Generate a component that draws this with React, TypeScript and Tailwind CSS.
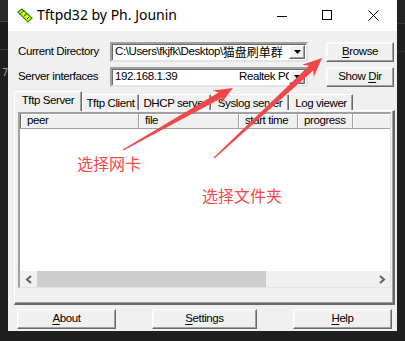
import React from "react";

type Pt = [number, number];

function arrowPoints(T: Pt, P: Pt, headLen: number, headW: number, shaftW: number, tailW: number) {
  const dx = P[0] - T[0];
  const dy = P[1] - T[1];
  const L = Math.hypot(dx, dy);
  const d = [dx / L, dy / L];
  const n = [-d[1], d[0]];
  const B = [P[0] - d[0] * headLen, P[1] - d[1] * headLen];
  const J = [P[0] - d[0] * headLen * 0.78, P[1] - d[1] * headLen * 0.78];
  const pts: number[][] = [
    [T[0] + n[0] * tailW, T[1] + n[1] * tailW],
    [J[0] + n[0] * shaftW, J[1] + n[1] * shaftW],
    [B[0] + n[0] * headW, B[1] + n[1] * headW],
    [P[0], P[1]],
    [B[0] - n[0] * headW, B[1] - n[1] * headW],
    [J[0] - n[0] * shaftW, J[1] - n[1] * shaftW],
    [T[0] - n[0] * tailW, T[1] - n[1] * tailW],
  ];
  return pts.map((p) => p.map((v) => v.toFixed(1)).join(",")).join(" ");
}

const F = "font-['Liberation_Sans',Arial,sans-serif] text-[11.5px] tracking-[-0.4px] text-black";

const raised =
  "bg-[#f0f0f0] border border-t-white border-l-white border-r-[#696969] border-b-[#696969] shadow-[inset_-1px_-1px_0_#a0a0a0,inset_1px_1px_0_#f8f8f8]";

function Btn({ w, children }: { w: string; children: React.ReactNode }) {
  return (
    <div className={`${w} h-[20px] ${raised} flex items-center justify-center ${F}`}>
      <span className="leading-none">{children}</span>
    </div>
  );
}

function U({ c }: { c: string }) {
  return <span className="underline underline-offset-[2px] decoration-[1px]">{c}</span>;
}

function DropBtn() {
  return (
    <div className={`w-[16px] h-full ${raised} flex items-center justify-center shrink-0`}>
      <svg width="7" height="4" viewBox="0 0 7 4">
        <polygon points="0,0 7,0 3.5,4" fill="#000" />
      </svg>
    </div>
  );
}

function Combo({ children }: { children: React.ReactNode }) {
  return (
    <div className="w-[198px] h-[20px] bg-white border-2 border-t-[#a0a0a0] border-l-[#a0a0a0] border-r-[#e3e3e3] border-b-[#e3e3e3] shadow-[inset_1px_1px_0_#696969] flex p-[1px] pl-[1px]">
      <div className="flex-1 overflow-hidden whitespace-nowrap flex items-center pl-[2px]">{children}</div>
      <DropBtn />
    </div>
  );
}

function Tab({ w, label, sel }: { w: string; label: string; sel?: boolean }) {
  return (
    <div
      className={`${w} ${
        sel ? "h-[20px] -mb-[1px] relative z-10 pt-[2px]" : "h-[16px] pt-[2px]"
      } bg-[#f0f0f0] border-t border-l border-t-white border-l-white border-r border-r-[#696969] shadow-[inset_-1px_0_0_#a0a0a0] rounded-t-[1px] flex justify-center ${F}`}
    >
      <span className="leading-[13px]">{label}</span>
    </div>
  );
}

function HeadCell({ w, label }: { w: string; label?: string }) {
  return (
    <div
      className={`${w} h-full bg-[#f0f0f0] border-r border-r-[#a0a0a0] shadow-[inset_1px_1px_0_#ffffff] flex items-center pl-[6px] ${F}`}
    >
      {label}
    </div>
  );
}

function Chevron({ left }: { left?: boolean }) {
  return (
    <svg width="8" height="9" viewBox="0 0 8 9">
      <polyline
        points={left ? "6,1 2,4.5 6,8" : "2,1 6,4.5 2,8"}
        fill="none"
        stroke="#606060"
        strokeWidth="2"
      />
    </svg>
  );
}

export default function App() {
  const a1 = arrowPoints([123, 150], [233, 88], 19, 8, 3.2, 0.6);
  const a2 = arrowPoints([214, 158], [322, 58], 19, 8.5, 3.2, 0.6);
  return (
    <div className="relative w-[405px] h-[341px] bg-[#1f1f1f] overflow-hidden flex">
      {/* left background strip */}
      <div className="w-[8px] h-full flex flex-col">
        <div className="h-[21px] bg-[#2b2b2b]" />
        <div className="h-[1px] bg-[#4a4a4a]" />
        <div className="h-[27px] bg-[#1c1c1c]" />
        <div className="h-[1px] bg-[#3a3a3a]" />
        <div className="h-[18px]" />
        <div className="text-[10px] leading-[10px] text-[#9a9a9a] pl-[2px] font-['DejaVu_Sans',sans-serif]">7</div>
      </div>

      {/* window */}
      <div className="w-[389px] h-[331px] flex flex-col">
        {/* title bar */}
        <div className="h-[31px] bg-white flex items-center">
          <div className="ml-[8px] w-[17px] h-[15px] mt-[-1px]">
            <svg width="17" height="15" viewBox="0 0 17 15">
              <polygon points="2,4 6,1 16,10 12,14" fill="#f4f400" stroke="#139a13" strokeWidth="1.2" />
              <line x1="5" y1="5" x2="8" y2="3" stroke="#0a5a0a" strokeWidth="1" />
              <line x1="8" y1="8" x2="11" y2="6" stroke="#0a5a0a" strokeWidth="1" />
              <line x1="11" y1="11" x2="13" y2="9" stroke="#0a5a0a" strokeWidth="1" />
              <circle cx="4" cy="6" r="0.8" fill="#b000b0" />
            </svg>
          </div>
          <div className="ml-[4px] font-['Noto_Sans',sans-serif] text-[14px] text-black leading-none mt-[-1px]">
            Tftpd32 by Ph. Jounin
          </div>
          <div className="flex-1" />
          <div className="w-[10px] h-[1px] bg-black mr-[35px] mt-[1px]" />
          <div className="w-[10px] h-[10px] border border-black mr-[36px] mt-[-1px]" />
          <svg width="11" height="11" viewBox="0 0 11 11" className="mr-[18px] mt-[-1px]">
            <line x1="0.5" y1="0.5" x2="10.5" y2="10.5" stroke="#000" strokeWidth="1" />
            <line x1="10.5" y1="0.5" x2="0.5" y2="10.5" stroke="#000" strokeWidth="1" />
          </svg>
        </div>

        {/* body */}
        <div className="flex-1 bg-[#f0f0f0] flex flex-col">
          <div className="mt-[11px] flex items-center h-[20px]">
            <div className={`w-[102px] pl-[10px] ${F}`}>Current Directory</div>
            <Combo>
              <span className={F}>{"C:\\Users\\fkjfk\\Desktop\\"}</span>
              <span className="font-['Noto_Sans_CJK_SC',sans-serif] text-[12px] leading-none text-black">猫盘刷单群</span>
            </Combo>
            <div className="ml-[18px]">
              <Btn w="w-[68px]">
                <U c="B" />rowse
              </Btn>
            </div>
          </div>

          <div className="mt-[5px] flex items-center h-[20px]">
            <div className={`w-[102px] pl-[10px] ${F}`}>Server interfaces</div>
            <Combo>
              <span className={`${F} w-[124px] shrink-0`}>192.168.1.39</span>
              <span className={F}>Realtek PCIe GbE</span>
            </Combo>
            <div className="ml-[18px]">
              <Btn w="w-[68px]">
                Show <U c="D" />ir
              </Btn>
            </div>
          </div>

          {/* tabs */}
          <div className="mt-[4px] ml-[6px] h-[19px] flex items-end">
            <Tab w="w-[68px]" label="Tftp Server" sel />
            <Tab w="w-[57px]" label="Tftp Client" />
            <Tab w="w-[72px]" label="DHCP server" />
            <Tab w="w-[78px]" label="Syslog server" />
            <Tab w="w-[64px]" label="Log viewer" />
          </div>

          {/* tab panel */}
          <div className="ml-[6px] w-[381px] h-[195px] border-t border-l border-r-2 border-b-2 border-t-white border-l-white border-r-[#696969] border-b-[#696969] shadow-[inset_-1px_-1px_0_#a0a0a0] pl-[3px] pt-[1px] pr-[2px] pb-[15px]">
            <div className="w-full h-full border-t-2 border-l-2 border-t-[#a0a0a0] border-l-[#a0a0a0] border-r border-b border-r-[#e3e3e3] border-b-[#e3e3e3] shadow-[inset_1px_1px_0_#696969] bg-white flex flex-col">
              <div className="h-[15px] flex border-b border-b-[#a0a0a0] pl-[1px] pt-[0px]">
                <HeadCell w="w-[118px]" label="peer" />
                <HeadCell w="w-[100px]" label="file" />
                <HeadCell w="w-[59px]" label="start time" />
                <HeadCell w="w-[55px]" label="progress" />
                <div className="flex-1 h-full bg-[#f0f0f0] shadow-[inset_1px_1px_0_#ffffff]" />
              </div>
              <div className="flex-1 bg-white" />
              <div className="h-[16px] flex bg-[#f0f0f0] pl-[1px]">
                <div className="w-[16px] h-full flex items-center justify-center">
                  <Chevron left />
                </div>
                <div className="w-[229px] h-full bg-[#cdcdcd]" />
                <div className="flex-1" />
                <div className="w-[17px] h-full flex items-center justify-center">
                  <Chevron />
                </div>
              </div>
            </div>
          </div>

          {/* bottom buttons */}
          <div className="mt-[4px] ml-[9px] flex gap-[36px]">
            <Btn w="w-[99px]">
              <U c="A" />bout
            </Btn>
            <Btn w="w-[105px]">
              <U c="S" />ettings
            </Btn>
            <Btn w="w-[99px]">
              <U c="H" />elp
            </Btn>
          </div>
        </div>
      </div>

      {/* right background strip */}
      <div className="flex-1 h-full flex flex-col">
        <div className="h-[23px] bg-[#232323]" />
        <div className="h-[1px] bg-[#3a3a3a]" />
        <div className="h-[27px]" />
        <div className="h-[1px] bg-[#333333]" />
      </div>

      {/* annotations */}
      <svg className="absolute inset-0 pointer-events-none" width="405" height="341" viewBox="0 0 405 341">
        <polygon points={a1} fill="#f04848" />
        <polygon points={a2} fill="#f04848" />
      </svg>
      <div className="absolute left-[77px] top-[153px] font-['Noto_Sans_CJK_SC',sans-serif] text-[16px] leading-[20px] text-[#f24a4a]">
        选择网卡
      </div>
      <div className="absolute left-[202px] top-[185px] font-['Noto_Sans_CJK_SC',sans-serif] text-[16px] leading-[20px] text-[#f24a4a]">
        选择文件夹
      </div>
    </div>
  );
}
